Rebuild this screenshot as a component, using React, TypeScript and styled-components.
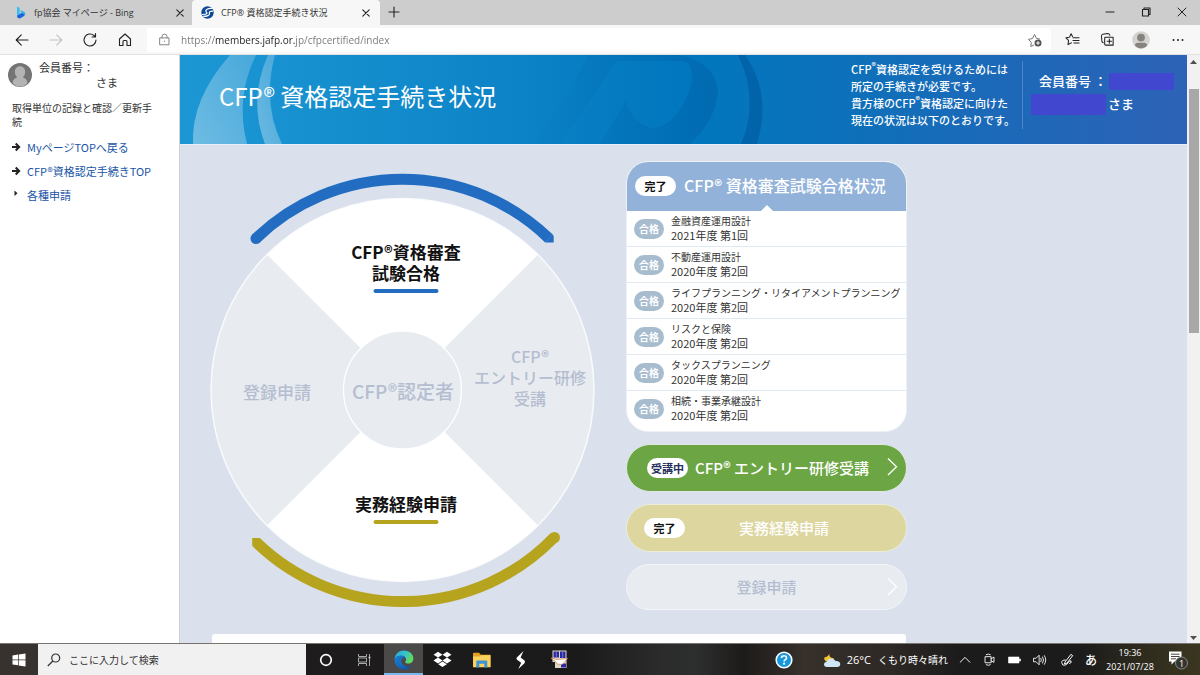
import React from "react";
import styled, { createGlobalStyle, css } from "styled-components";

const GlobalStyle = createGlobalStyle`
  *, *::before, *::after { box-sizing: border-box; }
  body { margin: 0; overflow: hidden; }
  button { border: 0; padding: 0; margin: 0; background: none; font: inherit; color: inherit; }
  h1, h2, p, ul { margin: 0; padding: 0; }
  ul { list-style: none; }
  svg { display: block; flex: none; }
`;

const uiFont = `"Open Sans", "Noto Sans CJK JP", sans-serif`;
const pageFont = `"Noto Sans CJK JP", sans-serif`;

const Screen = styled.div`
  display: flex;
  flex-direction: column;
  height: 100vh;
  overflow: hidden;
  background: #fff;
  font-family: ${uiFont};
`;

/* ---------- browser chrome ---------- */

const TabBar = styled.div`
  display: flex;
  flex: none;
  height: 25px;
  background: #cdcdcd;
`;

const Tab = styled.div<{ $active?: boolean }>`
  display: flex;
  align-items: center;
  gap: 7px;
  width: ${(p) => (p.$active ? "188px" : "192px")};
  padding: 0 8px 0 ${(p) => (p.$active ? "9px" : "14px")};
  border-radius: 4px 4px 0 0;
  background: ${(p) => (p.$active ? "#f7f7f7" : "transparent")};
  color: #333;
`;

const TabTitle = styled.span`
  flex: 1;
  font-size: 9px;
  line-height: 14px;
  white-space: nowrap;
  overflow: hidden;
`;

const IconButton = styled.button<{ $width?: number }>`
  display: flex;
  align-items: center;
  justify-content: center;
  flex: none;
  width: ${(p) => p.$width ?? 34}px;
  height: 24px;
  color: #222;

  &:disabled { color: #c4c4c4; }
`;

const WindowButtons = styled.div`
  display: flex;
  margin-left: auto;
`;

const Toolbar = styled.div`
  display: flex;
  align-items: center;
  flex: none;
  height: 30px;
  padding: 0 5px;
  background: #f7f7f7;
  border-bottom: 1px solid #e2e2e2;
`;

const AddressBox = styled.div`
  display: flex;
  align-items: center;
  flex: 1;
  height: 24px;
  margin-left: 5px;
  padding-left: 11px;
  border-radius: 3px;
  background: #fff;
  color: #777;
`;

const AddressInput = styled.input`
  flex: 1;
  min-width: 0;
  margin-left: 10px;
  padding: 0;
  border: 0;
  outline: 0;
  font: 10px/16px ${uiFont};
  color: transparent;
  background: linear-gradient(to right, #757575 34px, #1d1d1d 34px 114px, #757575 114px);
  -webkit-background-clip: text;
  background-clip: text;
`;

/* ---------- page ---------- */

const Viewport = styled.div`
  display: flex;
  flex: 1;
  min-height: 0;
  font-family: ${pageFont};
`;

const Sidebar = styled.aside`
  flex: none;
  width: 180px;
  padding: 5px 12px 0 8px;
  border-right: 1px solid #ccd0d8;
  background: #fff;
  color: #333;
`;

const Member = styled.div`
  display: flex;
  align-items: center;
  gap: 7px;
  font-size: 11px;
  line-height: 15px;
`;

const MemberText = styled.div`
  display: flex;
  flex-direction: column;

  span + span { padding-left: 57px; }
`;

const SidebarNote = styled.p`
  margin: 11px 0 0 4px;
  width: 144px;
  font-size: 10px;
  line-height: 14px;
`;

const SideLinks = styled.ul`
  margin: 6px 0 0 3px;
  font-size: 11px;
  line-height: 24px;
`;

const SideItem = styled.li`
  display: flex;
  align-items: center;
  gap: 6px;
  white-space: nowrap;

  a { color: #1a55a8; text-decoration: none; }
`;

const Main = styled.main`
  flex: 1;
  min-width: 0;
  overflow: hidden;
  background: #dae0ec;
`;

const Banner = styled.header`
  position: relative;
  display: flex;
  height: 90px;
  border-bottom: 1px solid #e9eef6;
  background: linear-gradient(to right, #1d97d4 0%, #148dcd 18%, #0a81c5 36%, #0077be 50%, #0c71ba 65%, #2067b8 85%, #2d63b7 100%);
  color: #fff;
`;

const BannerArt = styled.svg`
  position: absolute;
  left: 0;
  top: 0;
`;

const BannerTitle = styled.h1`
  position: relative;
  flex: 1;
  padding: 24px 0 0 39px;
  font-size: 24px;
  line-height: 34px;
  font-weight: 400;
`;

const Notice = styled.p`
  position: relative;
  margin: 6px 7px 0 0;
  height: 68px;
  font-size: 11px;
  line-height: 17px;
  font-weight: 500;
  white-space: nowrap;

  sup { font-size: 9px; line-height: 0; vertical-align: 5px; }
`;

const MemberPanel = styled.div`
  position: relative;
  display: flex;
  flex-direction: column;
  gap: 1px;
  height: 68px;
  width: 165px;
  margin-top: 6px;
  padding: 9px 0 0 8px;
  border-left: 1px solid #4f84c6;
  font-size: 13px;
  line-height: 22px;
  font-weight: 500;
  white-space: nowrap;
`;

const MemberLine = styled.div<{ $indent?: boolean }>`
  display: flex;
  align-items: center;
  gap: 2px;
  padding-left: ${(p) => (p.$indent ? "8px" : "0")};
`;

const Redacted = styled.span<{ $tall?: boolean }>`
  width: ${(p) => (p.$tall ? "75px" : "65px")};
  height: ${(p) => (p.$tall ? "21px" : "17px")};
  background: #4147cf;
`;

const Content = styled.div`
  padding: 16px 30px 0;
`;

const Columns = styled.div`
  display: flex;
  align-items: flex-start;
  gap: 30px;
`;

const StatusColumn = styled.div`
  display: flex;
  flex-direction: column;
  gap: 12px;
  width: 281px;
`;

const Card = styled.section`
  overflow: hidden;
  border: 1px solid #edf1f6;
  border-radius: 22px;
  background: #fff;
`;

const CardHead = styled.div`
  position: relative;
  display: flex;
  align-items: center;
  gap: 8px;
  height: 49px;
  padding: 0 0 2px 8px;
  background: #92b2d9;
  color: #fff;

  &::after {
    content: "";
    position: absolute;
    left: calc(50% - 6px);
    bottom: 0;
    border: 6px solid transparent;
    border-top: 0;
    border-bottom-color: #fff;
  }
`;

const CardTitle = styled.h2`
  padding-bottom: 2px;
  font-size: 16px;
  line-height: 24px;
  font-weight: 500;
`;

const Pill = styled.span<{ $navy?: boolean }>`
  display: flex;
  align-items: center;
  justify-content: center;
  flex: none;
  width: 41px;
  height: 20px;
  border-radius: 10px;
  background: #fff;
  color: ${(p) => (p.$navy ? "#26305c" : "#111")};
  font-size: 11px;
  line-height: 16px;
  font-weight: 700;
`;

const ExamList = styled.ul`
  display: flex;
  flex-direction: column;
  height: 220px;
  padding-bottom: 5px;
`;

const ExamRow = styled.li`
  display: flex;
  align-items: center;
  flex: 1;
  gap: 7px;
  padding-left: 7px;
  border-bottom: 1px solid #e3e9f1;
  white-space: nowrap;

  &:last-child { border-bottom: 0; }
`;

const PassBadge = styled.span`
  display: flex;
  align-items: center;
  justify-content: center;
  width: 30px;
  height: 20px;
  border-radius: 10px;
  background: #a8bccf;
  color: #fff;
  font-size: 10px;
  line-height: 14px;
  font-weight: 700;
`;

const ExamText = styled.div`
  display: flex;
  flex-direction: column;
  color: #333;
  font-size: 11px;
  line-height: 15px;

  strong { font-size: 10px; line-height: 14px; font-weight: 400; }
`;

type Tone = "green" | "gold" | "idle";

const toneStyles = {
  green: css`
    height: 48px; padding-left: 20px; background: #6ca644; color: #fff; border-color: #dfe8e2;
  `,
  gold: css`
    height: 48px; padding: 0 30px 0 17px; background: #ddd69f; color: #fff; border-color: #eceddb;
  `,
  idle: css`
    height: 46px; background: #e8ecf1; color: #b5bdd0; border-color: #f3f5f9;
  `,
};

const StepButton = styled.button<{ $tone: Tone }>`
  && {
    position: relative;
    display: flex;
    align-items: center;
    gap: 7px;
    width: 100%;
    border: 1px solid;
    border-radius: 24px;
    font-size: 15px;
    line-height: 22px;
    font-weight: 500;
    white-space: nowrap;
    ${(p) => toneStyles[p.$tone]}
  }
`;

const StepLabel = styled.span<{ $centered?: boolean }>`
  flex: 1;
  text-align: ${(p) => (p.$centered ? "center" : "left")};
`;

const Chevron = styled.svg`
  position: absolute;
  right: 8px;
  top: 12px;
`;

const LowerPanel = styled.section`
  height: 200px;
  width: 694px;
  margin: 23px 0 0 2px;
  border-radius: 3px;
  background: #fff;
`;

const Wheel = styled.div`
  position: relative;
  flex: none;
`;

const WheelLabel = styled.p<{ $x: number; $y: number; $size: number; $muted?: boolean }>`
  position: absolute;
  left: ${(p) => p.$x}px;
  top: ${(p) => p.$y}px;
  transform: translate(-50%, -50%);
  color: ${(p) => (p.$muted ? "#b5bdd0" : "#111")};
  font-size: ${(p) => p.$size}px;
  line-height: 21px;
  font-weight: ${(p) => (p.$muted ? 500 : 700)};
  text-align: center;
  white-space: nowrap;
`;

const Scrollbar = styled.div`
  display: flex;
  flex-direction: column;
  align-items: center;
  flex: none;
  width: 13px;
  padding: 5px 0 3px;
  background: #f1f1f1;
`;

const Thumb = styled.div`
  width: 10px;
  height: 42%;
  margin: 25px 0 auto;
  background: #a8a8a8;
`;

/* ---------- taskbar ---------- */

const Taskbar = styled.footer`
  display: flex;
  align-items: stretch;
  flex: none;
  height: 32px;
  border-top: 1px solid #77736f;
  background: linear-gradient(to right, #211f1e 0%, #1b1a1a 48%, #2b2b2c 55%, #2d2e2e 58%, #1d1b1a 62%, #37302b 67%, #2e2926 74%, #1c1b1c 80%, #1c1b1b 90%, #34301f 97%, #3a3620 100%);
  color: #fff;
`;

const StartButton = styled.button`
  display: flex;
  align-items: center;
  justify-content: center;
  && { background: #38322f; }
  width: 38px;
`;

const SearchBox = styled.label`
  display: flex;
  align-items: center;
  gap: 8px;
  width: 268px;
  padding-left: 9px;
  background: #f1f1f1;
  color: #333;
`;

const SearchInput = styled.input`
  flex: 1;
  min-width: 0;
  padding: 0;
  border: 0;
  outline: 0;
  background: none;
  font: 10px/16px ${pageFont};

  &::placeholder { color: #333; opacity: 1; }
`;

const TaskButtons = styled.div`
  display: flex;
`;

const TaskButton = styled.button<{ $active?: boolean }>`
  display: flex;
  align-items: center;
  justify-content: center;
  width: 39px;
  ${(p) => p.$active && css`&& { background: #4b4a49; box-shadow: inset 0 -2px #76b9ed; }`}
`;

const Tray = styled.div`
  display: flex;
  align-items: center;
  margin-left: auto;
`;

const TrayButton = styled.button<{ $width?: number }>`
  display: flex;
  align-items: center;
  justify-content: center;
  width: ${(p) => p.$width ?? 25}px;
  height: 31px;
`;

const Weather = styled.button`
  display: flex;
  align-items: center;
  gap: 6px;
  && { margin: 0 4px 0 26px; }
  white-space: nowrap;
`;

const WeatherText = styled.span`
  display: flex;
  gap: 7px;
  font-size: 11px;
  line-height: 14px;

  span + span { font-family: ${pageFont}; font-size: 10px; }
`;

const Ime = styled.span`
  font: 500 12px/16px ${pageFont};
`;

const Clock = styled.div`
  display: flex;
  flex-direction: column;
  align-items: center;
  width: 54px;
  margin-left: 3px;
  font-size: 9px;
  line-height: 14px;
`;

/* ---------- icons ---------- */

const Line = ({ d, size = 16, width = 1.1 }: { d: string; size?: number; width?: number }) => (
  <svg width={size} height={size} viewBox="0 0 16 16" fill="none" stroke="currentColor" strokeWidth={width} strokeLinecap="round" strokeLinejoin="round">
    <path d={d} />
  </svg>
);

const CLOSE = "M4.8 4.8 11.2 11.2M11.2 4.8 4.8 11.2";

const BingIcon = () => (
  <svg width="13" height="13" viewBox="0 0 13 13">
    <path d="M3 .8 5.7 1.8V8.2L3 10.2Z" fill="#37bdf2" />
    <path d="M3 9.7 9.6 5.8Q12.3 8.5 9.7 10.3L5.8 12.4Q3.1 12.4 3 9.7Z" fill="#1b62dc" />
    <path d="M6.1 4.1 10 5.8Q12 7.3 11.2 9.1 9.8 7.8 7.6 7Z" fill="#2bb5ea" />
  </svg>
);

const SiteIcon = () => (
  <svg width="13" height="13" viewBox="0 0 13 13">
    <circle cx="6.5" cy="6.5" r="6.2" fill="#0c4a94" />
    <path d="M11.5 2.5C7 1.8 3.5 4 5.3 6 6.8 7.4 6.2 8.3 1 8.5M12.3 5.2C8 4.9 8 6.5 8.5 7.5 9 9.2 6 10.4 2.2 10.4" fill="none" stroke="#fff" strokeWidth="1.2" />
  </svg>
);

const Person = ({ size, bg, fg }: { size: number; bg: string; fg: string }) => (
  <svg width={size} height={size} viewBox="0 0 24 24">
    <circle cx="12" cy="12" r="12" fill={bg} />
    <path d="M12 3.2C8.7 3.2 6.8 5.8 6.8 8.8c0 2.4 1 4.4 2.4 5.5C6.5 15.3 4.8 17 4.6 19.9 6.5 22.2 9 23.6 12 23.6s5.6-1.4 7.4-3.7c-.2-2.9-1.9-4.6-4.6-5.6 1.4-1.1 2.4-3.1 2.4-5.5 0-3-1.9-5.6-5.2-5.6Z" fill={fg} />
  </svg>
);

const ProfileIcon = () => (
  <svg width="18" height="18" viewBox="0 0 18 18">
    <circle cx="9" cy="9" r="8.8" fill="#d5d3d0" />
    <circle cx="9" cy="6.6" r="3.9" fill="#85827f" />
    <path d="M2.7 14.1c.7-1.8 2.3-2.4 4-2.4h4.6c1.7 0 3.3.6 4 2.4A8.3 8.3 0 0 1 9 17.4 8.3 8.3 0 0 1 2.7 14.1Z" fill="#85827f" />
  </svg>
);

const StarPlusIcon = () => (
  <svg width="16" height="16" viewBox="0 0 16 16" fill="none" stroke="#777" strokeLinejoin="round">
    <path d="M7 13 3.8 14.5 4.3 10.5 1.5 7.4 5.5 6.5 7.5 2.5 9.5 6.4 13 7.1" />
    <circle cx="11" cy="11" r="3.5" fill="#555" stroke="none" />
    <path d="M9.2 11h3.6M11 9.2v3.6" stroke="#fff" />
  </svg>
);

const BoldArrow = () => (
  <svg width="10" height="10" viewBox="0 0 10 10" fill="none" stroke="#222" strokeWidth="2">
    <path d="M1 5H8M4.7 1.5 8.2 5 4.7 8.5" />
  </svg>
);

const SmallTriangle = () => (
  <svg width="10" height="10" viewBox="0 0 10 10">
    <path d="M3.5 .5 6.5 3.3 3.5 6Z" fill="#222" />
  </svg>
);

const StartIcon = () => (
  <svg width="14" height="14" viewBox="0 0 14 14" fill="#fff">
    <path d="M.5 2.4 6 1.6V6.6H.5ZM6.7 1.5 13.5.5V6.6H6.7ZM.5 7.3H6v5L.5 11.6ZM6.7 7.3h6.8v6.2l-6.8-1Z" />
  </svg>
);

const SearchIcon = () => (
  <svg width="14" height="14" viewBox="0 0 14 14" fill="none" stroke="#333" strokeWidth="1.2">
    <circle cx="8.7" cy="5" r="4" />
    <path d="M5.9 8 .8 13" />
  </svg>
);

const TaskViewIcon = () => (
  <svg width="15" height="14" viewBox="0 0 15 14" fill="none" stroke="#aaa">
    <path d="M1.5 1v2.5h8V1M1.5 13v-2.5h8V13M1.5 5h8v4h-8ZM12.5 1v2M12.5 6v7" />
    <path d="M12.5 3.5v2" stroke="#fff" strokeWidth="1.6" />
  </svg>
);

const EdgeIcon = () => (
  <svg width="20" height="20" viewBox="0 0 20 20">
    <defs>
      <linearGradient id="edgeTop" x1="0" x2="1" y1="0" y2=".4">
        <stop offset="0" stopColor="#2aa7e0" />
        <stop offset=".6" stopColor="#35c5c9" />
        <stop offset="1" stopColor="#63d95b" />
      </linearGradient>
      <linearGradient id="edgeBase" x1="0" x2="1" y1="0" y2="1">
        <stop offset="0" stopColor="#1684d6" />
        <stop offset="1" stopColor="#0f4e9e" />
      </linearGradient>
    </defs>
    <path d="M.6 9C1.2 3.9 5 .6 10 .6c5.4 0 9.4 3.8 9.4 8 0 3-2.2 5-5 5-2 0-3.3-.7-3.3-1.5 0-.6 1-.9 1-2.5C12.1 7.5 10 5.8 7 5.8 3.6 5.8 1.5 7.4.6 9Z" fill="url(#edgeTop)" />
    <path d="M.6 9c1-2 3.3-3.4 6.4-3.4 1.6 0 3 .5 3.9 1.3C8.4 7 6.9 9 7.1 11.3c.3 3.4 3.6 5.4 6.9 5.2 1.7-.1 3.2-.8 4-1.3-1.7 2.7-4.7 4.3-8 4.3C4.5 19.5.4 15.2.6 9Z" fill="url(#edgeBase)" />
    <path d="M10.9 6.9C8.4 7 6.9 9 7.1 11.3c.2 2.8 2.4 4.6 4.9 5.1C8 17 4.2 14 4.4 10.5 4.5 8 7 5.6 10.9 6.9Z" fill="#1b6fc4" />
  </svg>
);

const DropboxIcon = () => (
  <svg width="19" height="17" viewBox="0 0 19 17" fill="#fff">
    <path d="M5 .8 9.5 3.7 5 6.6.5 3.7ZM14 .8l4.5 2.9L14 6.6 9.5 3.7ZM5 6.6l4.5 2.9L5 12.4.5 9.5ZM14 6.6l4.5 2.9-4.5 2.9-4.5-2.9ZM9.5 10.5l4.3 2.8-4.3 2.8-4.3-2.8Z" />
  </svg>
);

const FolderIcon = () => (
  <svg width="18" height="16" viewBox="0 0 18 16">
    <path d="M0 1.5Q0 .8 .8.8H6L7.8 2.8H17.5V15H0Z" fill="#e5a024" />
    <path d="M0 4.5H6.5L8 3.2H17.5V15.2H0Z" fill="#fbd25c" />
    <path d="M3.3 15.5V9.5Q3.3 8.5 4.3 8.5h9q1 0 1 1v6h-3v-3.8H6.3v3.8Z" fill="#3f94d6" />
  </svg>
);

const BoltIcon = () => (
  <svg width="12" height="18" viewBox="0 0 12 18" fill="#fff">
    <path d="M8.5 0 1.8 6.6Q1 7.8 2 8.8L6.2 11.8 3.3 18 9.5 12.2Q10.5 10.8 9.5 9.6L5.6 6.5Z" />
  </svg>
);

const MonitorIcon = () => (
  <svg width="19" height="19" viewBox="0 0 19 19">
    <path d="M2.5 .5H16.500V18H5V12H2.500Z" fill="#e1d9c8" />
    <path d="M3.500 1.500h5.500v6H3.500ZM10 1.500H15.500V8H10ZM11 13.500h5v4h-5Z" fill="#2b2aa4" />
    <path d="M1 8 7 9.500 17.500 8.500 14 12.500 12 14.500 7 14 6 12Z" fill="#fff" stroke="#c9834b" strokeWidth=".7" />
    <path d="M6.300 2v5M12.700 2v6" stroke="#8c86d8" strokeWidth=".8" />
  </svg>
);

const HelpIcon = () => (
  <svg width="18" height="18" viewBox="0 0 18 18">
    <circle cx="9" cy="9" r="7.8" fill="#1597dc" stroke="#fff" strokeWidth="1.6" />
    <path d="M6.5 7Q6.5 4.7 9 4.7T11.5 6.9Q11.5 8 10.2 8.7 9.1 9.3 9.1 10.5" fill="none" stroke="#fff" strokeWidth="1.6" />
    <circle cx="9.1" cy="12.7" r="1.1" fill="#fff" />
  </svg>
);

const CloudIcon = () => (
  <svg width="18" height="16" viewBox="0 0 18 16">
    <path d="M6.5.8C5.5 4 7.5 6.5 11 6.2 10 9.5 6 11 3 9.2 1.5 8.2 1 7 1.3 5.5 4 5.5 6 3.5 6.5.8Z" fill="#f5c531" />
    <path d="M4 15Q1 14.8 1 12.2 1 10 3.7 9.7 4.8 6.5 8.3 6.5q3 0 4.3 2.5 4.2-.3 4.7 3-.1 3-3.3 3Z" fill="#cfe6f7" />
  </svg>
);

const BatteryIcon = () => (
  <svg width="13" height="8" viewBox="0 0 13 8">
    <path d="M.5 1h10.5v6H.5ZM11.5 3h1v2h-1Z" fill="#fff" stroke="#fff" strokeWidth=".6" />
  </svg>
);

const NotificationIcon = () => (
  <svg width="21" height="20" viewBox="0 0 21 20">
    <path d="M1 1.5H13.5V11.5H6.5L3.5 14.5V11.5H1Z" fill="#fff" />
    <path d="M3 4.2h8.5M3 6.5h8.5M3 8.8h5" stroke="#33302b" strokeWidth=".9" />
    <circle cx="13.5" cy="13" r="6" fill="#35352f" stroke="#888" />
    <text x="13.5" y="16.5" fill="#fff" fontSize="9" textAnchor="middle">1</text>
  </svg>
);

/* ---------- sections ---------- */

const exams = [
  ["金融資産運用設計", "2021年度 第1回"],
  ["不動産運用設計", "2020年度 第2回"],
  ["ライフプランニング・リタイアメントプランニング", "2020年度 第2回"],
  ["リスクと保険", "2020年度 第2回"],
  ["タックスプランニング", "2020年度 第2回"],
  ["相続・事業承継設計", "2020年度 第2回"],
];

const StatusWheel = () => (
  <Wheel>
    <svg width="386" height="450" viewBox="0 0 386 450" aria-hidden="true">
      <circle cx="192.5" cy="229" r="191.5" fill="#e8ecf1" stroke="#f8fafc" strokeWidth="1.5" />
      <path d="M192.5 229 57.2 93.7A191.5 191.5 0 0 1 327.8 93.7ZM192.5 229 57.2 364.3A191.5 191.5 0 0 0 327.8 364.3Z" fill="#fff" />
      <circle cx="192.5" cy="229" r="59" fill="#e8ecf1" stroke="#fff" strokeWidth="1.3" />
      <path d="M46 77.5A210.5 210.5 0 0 1 339 77.5" fill="none" stroke="#226dc1" strokeWidth="11" />
      <circle cx="46" cy="77.5" r="5.5" fill="#226dc1" />
      <path d="M335.2 81.5 342.5 73.5 343.7 75V81.5Z" fill="#226dc1" />
      <path d="M46 381A210.5 210.5 0 0 0 344.5 376" fill="none" stroke="#b6a31e" strokeWidth="11" />
      <circle cx="344.5" cy="376.5" r="5.5" fill="#b6a31e" />
      <path d="M42.2 377H50L50 385H43.5L42.2 384Z" fill="#b6a31e" />
      <rect x="163.5" y="128" width="65" height="4" rx="2" fill="#226dc1" />
      <rect x="163.5" y="359" width="65" height="4" rx="2" fill="#b6a31e" />
    </svg>
    <WheelLabel $x={196} $y={101} $size={17}>CFP®資格審査<br />試験合格</WheelLabel>
    <WheelLabel $x={196} $y={342} $size={17}>実務経験申請</WheelLabel>
    <WheelLabel $x={67} $y={230} $size={17} $muted>登録申請</WheelLabel>
    <WheelLabel $x={193} $y={229} $size={19} $muted>CFP®認定者</WheelLabel>
    <WheelLabel $x={320} $y={216} $size={16} $muted>CFP®<br />エントリー研修<br />受講</WheelLabel>
  </Wheel>
);

const ChevronRight = () => (
  <Chevron width="11" height="20" viewBox="0 0 11 20" fill="none" stroke="#fff" strokeWidth="1.3">
    <path d="M1 1.5 9.5 9.8 1 18" />
  </Chevron>
);

export default function App() {
  return (
    <Screen>
      <GlobalStyle />
      <TabBar>
        <Tab>
          <BingIcon />
          <TabTitle>fp協会 マイページ - Bing</TabTitle>
          <IconButton $width={8} aria-label="タブを閉じる"><Line d={CLOSE} /></IconButton>
        </Tab>
        <Tab $active>
          <SiteIcon />
          <TabTitle>CFP® 資格認定手続き状況</TabTitle>
          <IconButton $width={12} aria-label="タブを閉じる"><Line d={CLOSE} /></IconButton>
        </Tab>
        <IconButton $width={28} aria-label="新しいタブ"><Line d="M8 3V13M3 8H13" /></IconButton>
        <WindowButtons>
          <IconButton $width={36} aria-label="最小化"><Line d="M4 8H12" /></IconButton>
          <IconButton $width={36} aria-label="元に戻す"><Line d="M4.5 5.5H10.5V12H4.5ZM6 5.5V4H12V10.5H10.5" /></IconButton>
          <IconButton $width={36} aria-label="閉じる"><Line d="M4 4 12 12M12 4 4 12" width={1} /></IconButton>
        </WindowButtons>
      </TabBar>
      <Toolbar>
        <IconButton aria-label="戻る"><Line d="M14 8H2.2M7.3 2.8 2.2 8 7.3 13.2" /></IconButton>
        <IconButton aria-label="進む" disabled><Line d="M2 8H13.8M8.7 2.8 13.8 8 8.7 13.2" /></IconButton>
        <IconButton aria-label="更新"><Line d="M14 8A6 6 0 1 1 12 3.5L13.5 5M13.5 1.5V5H10" /></IconButton>
        <IconButton $width={35} aria-label="ホーム"><Line d="M2.5 7 8 2 13.5 7V13.5H10V9.5Q10 8.5 9 8.5H7Q6 8.5 6 9.5V13.5H2.5Z" /></IconButton>
        <AddressBox>
          <Line size={13} d="M2.5 6H13.5V14.5H2.5ZM5 6V4Q5 1.5 8 1.5T11 4V6M8 10V10.5" />
          <AddressInput aria-label="アドレス" defaultValue="https://members.jafp.or.jp/cfpcertified/index" />
          <IconButton $width={32} aria-label="お気に入りに追加"><StarPlusIcon /></IconButton>
        </AddressBox>
        <IconButton $width={42} aria-label="お気に入り"><Line size={15} d="M8 4.8 6.5 1.8 4.8 5.5 1 6.2 3.8 9 3.2 13.5 6.8 11.5M8.5 6.2H15M8.5 9H15M9.5 11.8H15" /></IconButton>
        <IconButton $width={28} aria-label="コレクション"><Line size={15} d="M6 5.5H14V14H6Q5 14 5 13V6.5Q5 5.5 6 5.5ZM10 7.5V12M7.7 9.8H12.3M3.5 11.5Q2 11 2 9.500L1.500 4.500Q1.500 3 3 2.500L8 1.500Q10 1.500 10.500 3.500" /></IconButton>
        <IconButton $width={40} aria-label="プロファイル"><ProfileIcon /></IconButton>
        <IconButton aria-label="設定など">
          <svg width="12" height="4" viewBox="0 0 12 4" fill="#222"><circle cx="1.5" cy="2" r="1" /><circle cx="6" cy="2" r="1" /><circle cx="10.5" cy="2" r="1" /></svg>
        </IconButton>
      </Toolbar>

      <Viewport>
        <Sidebar>
          <Member>
            <Person size={24} bg="#747474" fg="#b3b3b3" />
            <MemberText><span>会員番号：</span><span>さま</span></MemberText>
          </Member>
          <SidebarNote>取得単位の記録と確認／更新手続</SidebarNote>
          <SideLinks>
            <SideItem><BoldArrow /><a href="#mypage">MyページTOPへ戻る</a></SideItem>
            <SideItem><BoldArrow /><a href="#cfp">CFP®資格認定手続きTOP</a></SideItem>
            <SideItem><SmallTriangle /><a href="#apply">各種申請</a></SideItem>
          </SideLinks>
        </Sidebar>

        <Main>
          <Banner>
            <BannerArt width="620" height="89" viewBox="0 0 620 89" aria-hidden="true">
              <defs>
                <linearGradient id="swoosh" x1="0" x2="1" y1="1" y2="0">
                  <stop offset="0" stopColor="#fff" stopOpacity=".36" />
                  <stop offset="1" stopColor="#fff" stopOpacity=".2" />
                </linearGradient>
                <linearGradient id="shade" x1="0" x2="1" y1="0" y2="0">
                  <stop offset="0" stopColor="#00569b" stopOpacity="0" />
                  <stop offset="1" stopColor="#00569b" stopOpacity=".34" />
                </linearGradient>
              </defs>
              <path d="M50 0Q11 44 13 89H67Q55 42 76 0Z" fill="url(#swoosh)" />
              <path d="M88 0Q68 45 85 89H102Q82 48 95 0Z" fill="url(#swoosh)" />
              <path d="M408 0H500Q537 8 538 38 535 66 510 89H420L446 45Q450 66 471 73 490 73 504 48 518 20 508 8L502 6H436Q410 45 380 89H350Q384 50 408 0Z" fill="url(#shade)" />
              <path d="M558 0Q580 46 561 89H577Q592 38 565 0Z" fill="#005a9e" fillOpacity=".65" />
            </BannerArt>
            <BannerTitle>CFP® 資格認定手続き状況</BannerTitle>
            <Notice>
              CFP<sup>®</sup>資格認定を受けるためには<br />
              所定の手続きが必要です。<br />
              貴方様のCFP<sup>®</sup>資格認定に向けた<br />
              現在の状況は以下のとおりです。
            </Notice>
            <MemberPanel>
              <MemberLine $indent>会員番号 ：<Redacted /></MemberLine>
              <MemberLine><Redacted $tall />さま</MemberLine>
            </MemberPanel>
          </Banner>

          <Content>
            <Columns>
              <StatusWheel />
              <StatusColumn>
                <Card>
                  <CardHead>
                    <Pill>完了</Pill>
                    <CardTitle>CFP® 資格審査試験合格状況</CardTitle>
                  </CardHead>
                  <ExamList>
                    {exams.map(([name, term]) => (
                      <ExamRow key={name}>
                        <PassBadge>合格</PassBadge>
                        <ExamText><strong>{name}</strong><span>{term}</span></ExamText>
                      </ExamRow>
                    ))}
                  </ExamList>
                </Card>
                <StepButton $tone="green">
                  <Pill $navy>受講中</Pill>
                  <StepLabel>CFP® エントリー研修受講</StepLabel>
                  <ChevronRight />
                </StepButton>
                <StepButton $tone="gold">
                  <Pill>完了</Pill>
                  <StepLabel $centered>実務経験申請</StepLabel>
                </StepButton>
                <StepButton $tone="idle">
                  <StepLabel $centered>登録申請</StepLabel>
                  <ChevronRight />
                </StepButton>
              </StatusColumn>
            </Columns>
            <LowerPanel />
          </Content>
        </Main>

        <Scrollbar>
          <svg width="7" height="4" viewBox="0 0 7 4"><path d="M0 4 3.5 0 7 4Z" fill="#505050" /></svg>
          <Thumb />
          <svg width="7" height="4" viewBox="0 0 7 4"><path d="M0 0 3.5 4 7 0Z" fill="#505050" /></svg>
        </Scrollbar>
      </Viewport>

      <Taskbar>
        <StartButton aria-label="スタート"><StartIcon /></StartButton>
        <SearchBox>
          <SearchIcon />
          <SearchInput aria-label="検索" placeholder="ここに入力して検索" />
        </SearchBox>
        <TaskButtons>
          <TaskButton aria-label="Cortana">
            <svg width="14" height="14" viewBox="0 0 14 14"><circle cx="7" cy="7" r="5.3" fill="none" stroke="#fff" strokeWidth="1.7" /></svg>
          </TaskButton>
          <TaskButton aria-label="タスク ビュー"><TaskViewIcon /></TaskButton>
          <TaskButton $active aria-label="Microsoft Edge"><EdgeIcon /></TaskButton>
          <TaskButton aria-label="Dropbox"><DropboxIcon /></TaskButton>
          <TaskButton aria-label="エクスプローラー"><FolderIcon /></TaskButton>
          <TaskButton aria-label="ランチャー"><BoltIcon /></TaskButton>
          <TaskButton aria-label="リモート"><MonitorIcon /></TaskButton>
        </TaskButtons>
        <Tray>
          <TrayButton aria-label="ヘルプ"><HelpIcon /></TrayButton>
          <Weather>
            <CloudIcon />
            <WeatherText><span>26°C</span><span>くもり時々晴れ</span></WeatherText>
          </Weather>
          <TrayButton aria-label="隠れているインジケーター"><Line size={14} d="M2.5 10.5 8 5 13.5 10.5" /></TrayButton>
          <TrayButton aria-label="カメラ"><Line size={13} d="M3 4.5H10V12H3ZM10 7 13.5 5V11.5L10 9.5M4 2Q6.5.5 9 2M4 14.5Q6.5 16 9 14.5" /></TrayButton>
          <TrayButton aria-label="バッテリー"><BatteryIcon /></TrayButton>
          <TrayButton aria-label="音量"><Line size={14} d="M1 6H3.5L7 2.5V13.5L3.5 10H1ZM9 6Q10.3 8 9 10M11 4.5Q13.3 8 11 11.5M13 3Q16.3 8 13 13" width={1} /></TrayButton>
          <TrayButton $width={30} aria-label="ペン"><Line size={14} d="M6 10 12.5 1.5 14.5 3 8 11.5 5.5 12.5ZM6 8Q1.5 8 2 11 2.5 14.5 5 14 8 13.5 9 11.5 10 8.5 12.5 9 14 11 11 12" /></TrayButton>
          <TrayButton $width={18} aria-label="日本語入力"><Ime>あ</Ime></TrayButton>
          <Clock><span>19:36</span><span>2021/07/28</span></Clock>
          <TrayButton $width={43} aria-label="通知"><NotificationIcon /></TrayButton>
        </Tray>
      </Taskbar>
    </Screen>
  );
}
